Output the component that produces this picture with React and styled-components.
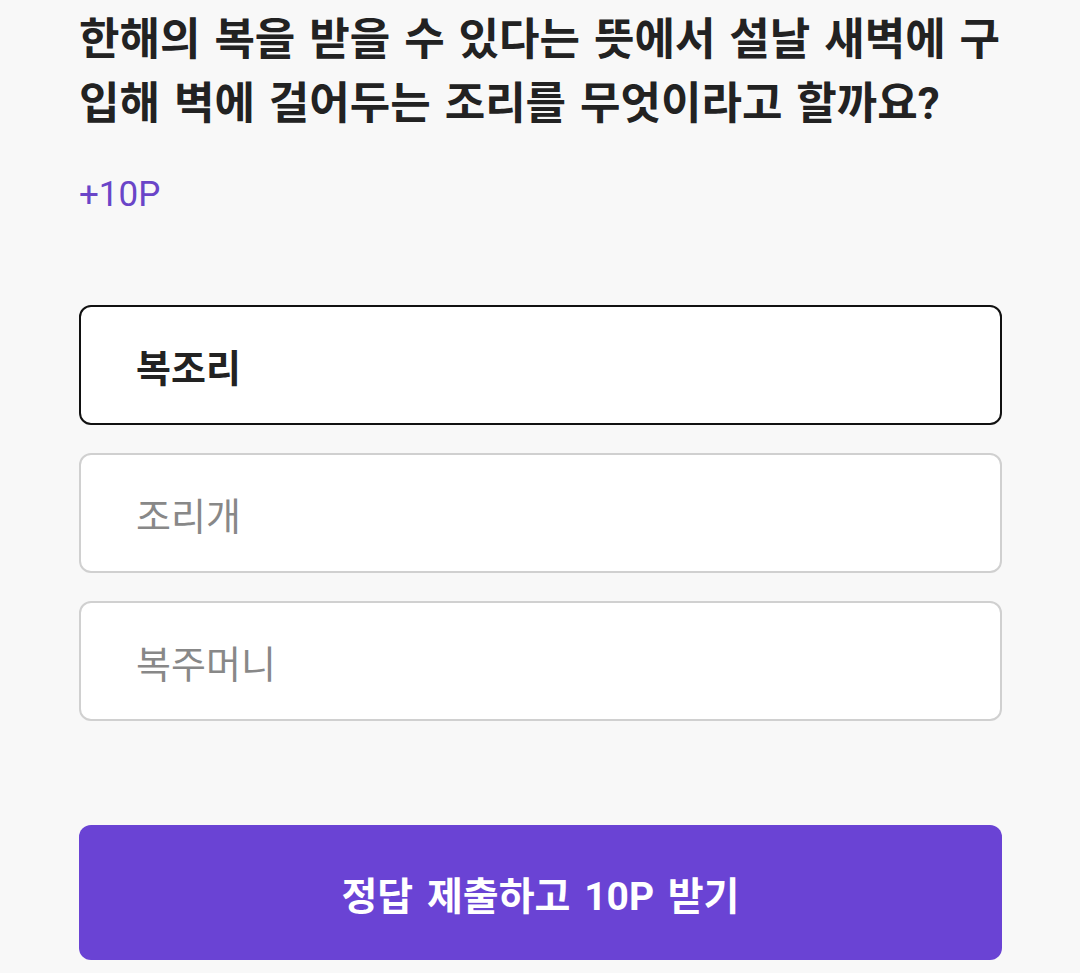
import React, { useState } from 'react'
import styled, { createGlobalStyle } from 'styled-components'

const GlobalStyle = createGlobalStyle`
  html, body {
    margin: 0;
    padding: 0;
    background: #f8f8f8;
  }
  body {
    font-family: Roboto, 'Noto Sans CJK KR', sans-serif;
  }
`

const options = ['복조리', '조리개', '복주머니']

const App = () => {
  const [selected, setSelected] = useState(0)

  return (
    <Wrapper>
      <GlobalStyle />
      {/* question */}
      <Question>
        한해의 복을 받을 수 있다는 뜻에서 설날 새벽에 구입해 벽에 걸어두는 조리를 무엇이라고 할까요?
      </Question>
      <Reward>+10P</Reward>
      {/* answer options */}
      <OptionList>
        {options.map((option, index) => (
          <Option
            key={option}
            $selected={selected === index}
            onClick={() => setSelected(index)}
          >
            {option}
          </Option>
        ))}
      </OptionList>
      {/* submit */}
      <SubmitButton>정답 제출하고 10P 받기</SubmitButton>
    </Wrapper>
  )
}

const Wrapper = styled.div`
  display: flex;
  flex-direction: column;
  padding: 8px 78px 0 79px;
  min-height: 973px;
  box-sizing: border-box;
`

const Question = styled.h1`
  margin: 0;
  font-size: 44px;
  font-weight: 700;
  line-height: 64px;
  color: #222;
  word-spacing: 3px;
`

const Reward = styled.div`
  margin-top: 39px;
  font-size: 35px;
  line-height: 40px;
  color: #6a45c8;
`

const OptionList = styled.div`
  display: flex;
  flex-direction: column;
  gap: 28px;
  margin-top: 90px;
`

const Option = styled.button`
  display: flex;
  align-items: center;
  height: 120px;
  padding: 0 0 0 55px;
  border-radius: 12px;
  border: 2px solid ${({ $selected }) => ($selected ? '#111' : '#d0d0d0')};
  background: #fff;
  font-family: inherit;
  font-size: 38px;
  font-weight: ${({ $selected }) => ($selected ? 700 : 400)};
  color: ${({ $selected }) => ($selected ? '#222' : '#888')};
  text-align: left;
  cursor: pointer;
`

const SubmitButton = styled.button`
  margin-top: 104px;
  height: 135px;
  border: none;
  border-radius: 12px;
  background: #6a43d4;
  color: #fff;
  font-family: inherit;
  font-size: 39px;
  font-weight: 700;
  word-spacing: 4px;
  cursor: pointer;
`

export default App
